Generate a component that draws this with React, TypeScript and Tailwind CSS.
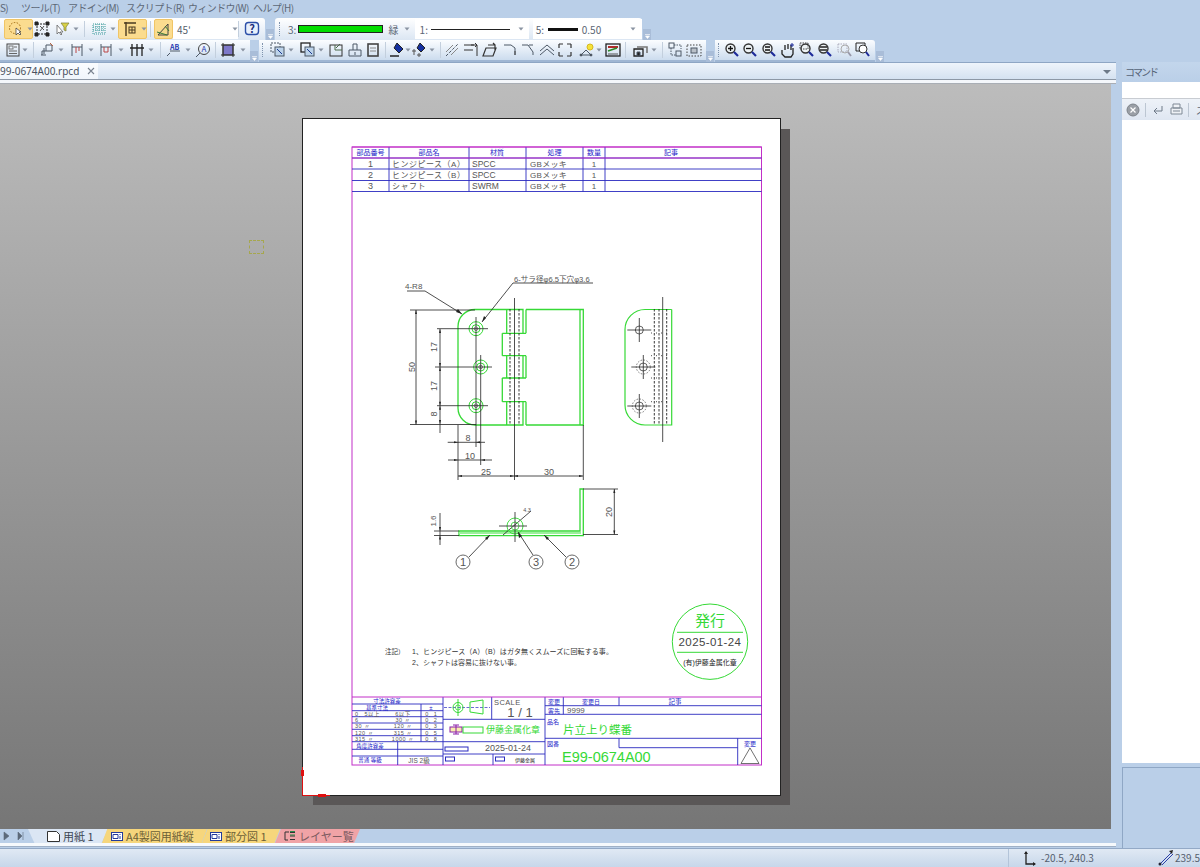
import React from "react";

const Ico = ({ c = "", children, w = 16 }: { c?: string; children: React.ReactNode; w?: number }) => (
  <svg className={"shrink-0 " + c} width={w} height={16} viewBox={`0 0 ${w} 16`} fill="none" stroke="#4d5866" strokeWidth={1}>
    {children}
  </svg>
);
const Drop = ({ c = "" }: { c?: string }) => (
  <svg className={"shrink-0 " + c} width={6} height={4} viewBox="0 0 6 4">
    <path d="M0.5 0.5h5L3 3.5z" fill="#8a94a2" />
  </svg>
);
const Sep = ({ c = "" }: { c?: string }) => <div className={"w-px h-[16px] shrink-0 bg-[#c3cfdd] " + c} />;
const Grip = ({ c = "" }: { c?: string }) => (
  <div className={"w-px h-[14px] shrink-0 border-l border-dotted border-[#7f93ad] " + c} />
);
const Over = ({ c = "" }: { c?: string }) => (
  <div className={"w-[8px] h-[11px] self-end shrink-0 bg-[#a9bdd8] flex items-end justify-center pb-[1px] " + c}>
    <svg width={5} height={5} viewBox="0 0 5 5"><path d="M0 .5h5M.5 2h4L2.5 4.5z" stroke="#fff" fill="#fff" strokeWidth={0.6} /></svg>
  </div>
);
const Mag = ({ c = "", children }: { c?: string; children?: React.ReactNode }) => (
  <Ico c={c}>
    <circle cx={6.5} cy={6.5} r={4.5} stroke="#333" strokeWidth={1.4} fill="#eef3f5" />
    <path d="M10 10l4 4" stroke="#1d2a9a" strokeWidth={2.2} />
    {children}
  </Ico>
);

const T1 = "bg-linear-to-b from-[#ffffff] to-[#dbe6f3]";
const T2 = "bg-linear-to-b from-[#fbfdff] to-[#ccdcee] border-b-2 border-[#9fb6d3]";
const YB = "h-[20px] flex items-center rounded-[2px] bg-[#fbdc8f] border border-[#f0c566]";

function Toolbar1() {
  return (
    <div className="h-[22px] flex items-stretch text-[10px] text-[#5b6675]">
      <div className={"w-[265px] flex items-center rounded-tr-[3px] " + T1}>
        <div className={"ml-1 w-[29px] gap-[3px] pl-[3px] " + YB}>
          <Ico><circle cx={7} cy={7} r={5.5} stroke="#a06a10" strokeDasharray="1.5 1.5" /><path d="M8 7v7l2-2 2 2 1-1-2-2h2z" fill="#fff" stroke="#333" strokeWidth={0.7} /></Ico>
          <Drop />
        </div>
        <Ico c="ml-[1px]"><rect x={3} y={3} width={10} height={10} strokeDasharray="2 1" stroke="#222" /><path d="M1 1h3v3H1zM12 1h3v3h-3zM1 12h3v3H1zM12 12h3v3h-3z" fill="#222" stroke="#222" /><path d="M6 5l4 4M6 10l4-5" stroke="#555" /></Ico>
        <Ico c="ml-1"><path d="M3 4v9l2-2 2 3 1-1-2-2h3z" fill="#fff" stroke="#666" strokeWidth={0.8} /><path d="M7 2h8l-3 4v4l-2-1V6z" fill="#d9d245" stroke="#7a7a3a" strokeWidth={0.7} /></Ico>
        <Drop c="ml-[3px]" />
        <Sep c="ml-[5px]" />
        <Ico c="ml-[6px]"><path d="M2 3h12v10H2zM2 6h12M2 9h12M5 3v10M8 3v10M11 3v10" stroke="#3a9a9a" strokeDasharray="1 1" /></Ico>
        <Drop c="ml-[3px]" />
        <div className={"ml-[2px] w-[29px] gap-[3px] pl-[3px] " + YB}>
          <Ico><path d="M2 2h12M4 1v14" stroke="#4a3a20" strokeWidth={1.4} /><rect x={7} y={6} width={6} height={6} stroke="#4a3a20" /><path d="M7 9h6M10 6v6" stroke="#4a3a20" /></Ico>
          <Drop />
        </div>
        <Sep c="ml-[3px]" />
        <div className={"ml-[3px] w-[19px] justify-center " + YB}>
          <Ico><path d="M2 14L12 3v11z" stroke="#444" fill="#f3d98a" /><path d="M1 11l10 3M9 5l4 5" stroke="#3a7a3a" /></Ico>
        </div>
        <div className="h-[20px] w-[65px] bg-white flex items-center pl-[4px] relative text-[10px] text-[#555f6d]">
          45'
          <Drop c="ml-[41px]" />
        </div>
        <Sep />
        <Ico c="ml-[5px]"><rect x={1.5} y={1.5} width={13} height={12} rx={3} stroke="#2c4fa8" strokeWidth={1.4} fill="#e8f0fb" /><text x={8} y={11.5} fontSize={11} fontWeight={700} textAnchor="middle" fill="#1c2f7a" stroke="none">?</text></Ico>
      </div>
      <Over c="ml-px" />
      <div className={"ml-[1px] w-[367px] flex items-center rounded-tl-[3px] rounded-tr-[3px] " + T1}>
        <Grip c="ml-[4px]" />
        <span className="ml-[8px] w-[10px]">3:</span>
        <div className="w-[87px] h-[8px] bg-[#00dc00] border border-[#222] ml-[0px]" />
        <span className="ml-[6px]">緑</span>
        <Drop c="ml-[5px]" />
        <div className="ml-[5px] h-[20px] w-[117px] bg-white flex items-center pl-[5px]">
          <span className="w-[11px]">1:</span>
          <div className="w-[79px] h-px bg-[#222]" />
          <Drop c="ml-[8px]" />
        </div>
        <div className="ml-[4px] h-[20px] w-[112px] bg-white flex items-center pl-[3px]">
          <span className="w-[12px]">5:</span>
          <div className="w-[30px] h-[3px] bg-[#111]" />
          <span className="ml-[4px]">0.50</span>
          <Drop c="ml-[29px]" />
        </div>
      </div>
      <Over c="ml-px" />
    </div>
  );
}

function Toolbar2() {
  return (
    <div className="h-[22px] flex items-stretch">
      <div className={"w-[250px] flex items-center " + T2}>
        <Ico c="ml-[5px]"><rect x={2} y={2} width={12} height={12} stroke="#444" /><rect x={4} y={4} width={4} height={3} stroke="#777" /><path d="M9 5h3M4 9h8M4 11.5h8" stroke="#666" /></Ico>
        <Drop c="ml-[1px]" />
        <Sep c="ml-[5px]" />
        <Ico c="ml-[6px]"><path d="M6 3h6v6H6zM6 9L2 9v4M1 13h5M4 6v6" /><path d="M10 1l3 3" stroke="#b64" /></Ico>
        <Drop c="ml-[2px]" />
        <Ico c="ml-[5px]"><path d="M3 2v12M13 2v12M3 5h10" /><path d="M7 5v6M10 5v4" stroke="#b44" /></Ico>
        <Drop c="ml-[3px]" />
        <Ico c="ml-1"><path d="M3 2v12M13 2v12M3 5h10" /><path d="M6 5v5h4V5" stroke="#b44" /></Ico>
        <Drop c="ml-1" />
        <Ico c="ml-[5px]"><path d="M3 2v12M8 2v12M13 2v12M1 6h14" strokeWidth={1.3} stroke="#222" /></Ico>
        <Drop c="ml-[3px]" />
        <Sep c="ml-[6px]" />
        <Ico c="ml-1"><path d="M2 14l3-3M5 9h10" /><text x={5} y={7.5} fontSize={7} fontWeight={700} fill="#2a3ab0" stroke="none">AB</text></Ico>
        <Drop c="ml-1" />
        <Ico c="ml-1"><circle cx={9} cy={7} r={5.5} stroke="#444" /><text x={6.5} y={10} fontSize={8} fill="#2a3ab0" stroke="none">A</text><path d="M1 15l4-4" /></Ico>
        <Sep c="ml-1" />
        <Ico c="ml-1"><rect x={3} y={3} width={10} height={10} fill="#7d78c8" stroke="#333" /><path d="M1 3h14M1 13h14M3 1v14M13 1v14" stroke="#333" /></Ico>
        <Drop c="ml-1" />
      </div>
      <Over />
      <div className={"ml-px w-[447px] flex items-center " + T2}>
        <Grip c="ml-[3px]" />
        <Ico c="ml-[7px]"><rect x={1} y={1} width={9} height={9} strokeDasharray="2 1" /><rect x={5} y={5} width={9} height={9} fill="#bcd3ea" /><path d="M7 7l5 5" stroke="#1c3a90" /></Ico>
        <Drop c="ml-[2px]" />
        <Ico c="ml-[6px]"><rect x={1} y={1} width={9} height={9} stroke="#222" strokeWidth={1.3} /><rect x={5} y={5} width={9} height={9} fill="#bcd3ea" /><path d="M7 7l5 5" stroke="#1c3a90" /></Ico>
        <Drop c="ml-[2px]" />
        <Ico c="ml-1"><rect x={2} y={3} width={12} height={11} stroke="#333" /><path d="M7 3v5h7M12 2l-4 4" stroke="#4a6a4a" /></Ico>
        <Ico c="ml-[3px]"><path d="M2 8h12M2 8v6h12V8M6 8V2h4v6M8 10v3" /></Ico>
        <Ico c="ml-[2px]"><rect x={3} y={2} width={10} height={12} strokeWidth={1.6} stroke="#444" /><path d="M5 6h6M5 9h6" stroke="#888" /></Ico>
        <Sep c="ml-1" />
        <Ico c="ml-[3px]"><path d="M8 1l6 6-4 4-5-5z" fill="#1430a0" stroke="#222" /><path d="M1 14h9" stroke="#222" strokeWidth={1.5} /></Ico>
        <Drop c="ml-0" />
        <Ico c="ml-0"><path d="M9 1l5 5-4 4-4-4z" fill="#1430a0" stroke="#222" /><path d="M1 9h4M3 7v6M8 11v4M6 13h4" stroke="#555" /></Ico>
        <Drop c="ml-[2px]" />
        <Sep c="ml-[5px]" />
        <Ico c="ml-[3px]"><path d="M2 14L14 2" strokeDasharray="3 1.5" /><path d="M9 3l-7 7M14 6l-7 7" stroke="#888" /></Ico>
        <Ico c="ml-[3px]"><path d="M1 3h10M8 3h6v11M1 8h9M12 1l2 2-2 2" stroke="#333" /></Ico>
        <Ico c="ml-[3px]"><path d="M4 6h10l-3 8H1zM6 3h7v6M11 1l2 2" stroke="#333" strokeWidth={1.2} /></Ico>
        <Ico c="ml-1"><path d="M2 3h7l4 3v7" /><path d="M13 9v4" stroke="#444" /></Ico>
        <Ico c="ml-[2px]"><path d="M2 3h6l5 7v3M9 3l4 0" /></Ico>
        <Ico c="ml-[3px]"><path d="M1 9l7-6 7 6M1 13l7-6 7 6" /></Ico>
        <Ico c="ml-[2px]"><path d="M2 2h4M10 2h4M2 14h4M10 14h4M2 2v4M2 10v4M14 2v4M14 10v4" stroke="#333" strokeWidth={1.2} /></Ico>
        <Ico c="ml-[6px]"><path d="M2 13l5-5 5 5z" /><circle cx={11} cy={5} r={3} fill="#f5e23a" stroke="#d6b820" /><circle cx={2} cy={13} r={1} fill="#333" /><circle cx={12} cy={13} r={1} fill="#333" /></Ico>
        <Drop c="ml-[1px]" />
        <Ico c="ml-[3px]"><rect x={1} y={2} width={14} height={12} stroke="#222" strokeWidth={1.3} /><path d="M3 5h10" stroke="#b02a2a" strokeWidth={2} /><path d="M3 9l9-3" stroke="#2a8a2a" strokeWidth={1.5} /><path d="M3 12h10" stroke="#555" /></Ico>
        <Sep c="ml-1" />
        <Ico c="ml-[6px]"><path d="M2 7h9v7H2z" stroke="#222" strokeWidth={1.3} /><path d="M5 5h10v6" stroke="#777" strokeWidth={1.6} /><path d="M5 10h3v4H5z" fill="#222" /></Ico>
        <Drop c="ml-[3px]" />
        <Sep c="ml-[5px]" />
        <Ico c="ml-1"><rect x={2} y={1} width={5} height={5} /><rect x={9} y={9} width={5} height={5} /><path d="M4 6v7h5M7 3h7v4" strokeDasharray="1.5 1" /></Ico>
        <Ico c="ml-[3px]"><rect x={1} y={3} width={14} height={11} strokeDasharray="1.5 1.5" stroke="#444" /><rect x={5} y={6} width={6} height={5} fill="#b9c0c8" /></Ico>
      </div>
      <Over />
      <div className={"ml-px w-[160px] flex items-center rounded-tr-[3px] " + T2}>
        <Grip c="ml-[3px]" />
        <Mag c="ml-[5px]"><path d="M4 6.5h5M6.5 4v5" strokeWidth={1.3} stroke="#111" /></Mag>
        <Mag c="ml-[2px]"><path d="M4 6.5h5" strokeWidth={1.3} stroke="#111" /></Mag>
        <Mag c="ml-[3px]"><path d="M4 5h5M4 8h5" strokeWidth={1.4} stroke="#111" /></Mag>
        <Ico c="ml-[2px]"><path d="M3 8v4l3 3h6l2-3V6M6 8V3M9 7V2M12 8V3" stroke="#222" strokeWidth={1.3} /><path d="M13 1v4M11 3h4" stroke="#1d2a9a" /></Ico>
        <Mag c="ml-1"><rect x={1} y={1} width={8} height={6} strokeDasharray="1.5 1" stroke="#444" /></Mag>
        <Mag c="ml-[2px]"><path d="M3 5h7M3 8h7" strokeWidth={1.6} stroke="#222" /></Mag>
        <Ico c="ml-1"><rect x={1} y={2} width={9} height={8} strokeDasharray="1.5 1" stroke="#aab" /><circle cx={8} cy={7} r={4} stroke="#aaa" /><path d="M11 10l3 4" stroke="#99a" strokeWidth={1.8} /></Ico>
        <Ico c="ml-[2px]"><path d="M1 1h9v8H1z" stroke="#222" /><circle cx={8} cy={7} r={4} stroke="#333" fill="#fff" /><path d="M11 10l3 4" stroke="#1d2a9a" strokeWidth={2} /></Ico>
      </div>
      <Over c="ml-px" />
    </div>
  );
}

const Ar = ({ x, y, d, s = 4 }: { x: number; y: number; d: "u" | "d" | "l" | "r"; s?: number }) => {
  const p = {
    u: `${x},${y} ${x - 1},${y + s} ${x + 1},${y + s}`,
    d: `${x},${y} ${x - 1},${y - s} ${x + 1},${y - s}`,
    l: `${x},${y} ${x + s},${y - 1} ${x + s},${y + 1}`,
    r: `${x},${y} ${x - s},${y - 1} ${x - s},${y + 1}`,
  }[d];
  return <polygon points={p} fill="#222" stroke="none" />;
};

const G = "#36d936";
const Bl = "#2a2ac0";
const Mg = "#c22fc8";
const K = "#222";
const Tx = "#555";

const L = ({ d, s = K, w = 0.8, dash }: { d: string; s?: string; w?: number; dash?: string }) => (
  <path d={d} stroke={s} strokeWidth={w} strokeDasharray={dash} fill="none" />
);
const Tt = ({ x, y, t, f = 7, c = Tx, a = "middle", r, ls }: { x: number; y: number; t: string; f?: number; c?: string; a?: "start" | "middle" | "end"; r?: boolean; ls?: number }) => (
  <text x={x} y={y} fontSize={f} fill={c} textAnchor={a} letterSpacing={ls} transform={r ? `rotate(-90 ${x} ${y})` : undefined}>
    {t}
  </text>
);
const Cross = ({ x, y, rx = 12, ry = 12 }: { x: number; y: number; rx?: number; ry?: number }) => (
  <L d={`M${x - rx} ${y}H${x + rx}M${x} ${y - ry}V${y + ry}`} />
);

function Drawing() {
  return (
    <svg width={477} height={676} viewBox="303 119 477 676" className="block overflow-visible font-['Liberation_Sans','Noto_Sans_CJK_JP',sans-serif]">
      {/* border */}
      <rect x={352} y={147} width={409.5} height={618} fill="none" stroke={Mg} strokeWidth={1} />
      {/* parts table */}
      <L s={Bl} d="M352 158H761.5M352 169H761.5M352 180.5H761.5M352 191.5H761.5M389 147V191.5M469 147V191.5M526 147V191.5M583 147V191.5M605 147V191.5" w={0.9} />
      <L s={Mg} d="M352 147H761.5M352 158H761.5" w={1} />
      {[["部品番号",370.5],["部品名",429],["材質",497],["処理",554.5],["数量",594],["記事",671]].map(([t,x]) => (
        <Tt key={t as string} x={x as number} y={155} t={t as string} f={7} c="#2222c8" />
      ))}
      {[["1","ヒンジピース（A）","SPCC"],["2","ヒンジピース（B）","SPCC"],["3","シャフト","SWRM"]].map((r,i) => {
        const y = [166.5,178,189][i];
        return (
          <g key={i}>
            <Tt x={370.5} y={y} t={r[0]} f={9} />
            <Tt x={392} y={y} t={r[1]} f={8} a="start" ls={0.5} />
            <Tt x={472} y={y} t={r[2]} f={8.5} a="start" />
            <Tt x={530} y={y} t="GBメッキ" f={8} a="start" ls={0.3} />
            <Tt x={594} y={y} t="1" f={8} />
          </g>
        );
      })}

      {/* front view */}
      <L s={G} w={1.3} d="M475 309.5H523V333.3M475 425H523V401.7M475 309.5A17 17 0 0 0 458 326.5V408A17 17 0 0 0 475 425M506.7 309.5V333.3M506.7 355.7V378M506.7 401.7V425M502.3 333.3H526M502.3 355.7H526M502.3 378H526M502.3 401.7H526M502.3 333.3V355.7M502.3 378V401.7M523 355.7V378M526 309.5V333.3M526 355.7V378M526 401.7V425M526 309.5H583.3V425H526M580 309.5V425" />
      <L dash="2.5 1.5" w={0.9} d="M510 309V425M519 309V425" />
      <L d="M514.5 298V480" />
      {[[476,328.7],[480.7,367],[476,405.7]].map(([x,y]) => (
        <g key={y}>
          <circle cx={x} cy={y} r={7} fill="none" stroke={G} strokeWidth={1} />
          <circle cx={x} cy={y} r={4} fill="none" stroke={G} strokeWidth={1} />
          <circle cx={x} cy={y} r={1.8} fill="none" stroke={K} strokeWidth={0.5} />
        </g>
      ))}
      <L d="M410 310H475M410 424.5H476M437 328.7H488M435 367H492M437 405.7H488M476 317V447M480.7 355V465M458 425V480M583.3 425V480" />
      <L d="M416 310V424.5M440 329V433M447.7 442.3H485M448 460H492M458 476H514M514 476H583" />
      <Ar x={416} y={310} d="u" /><Ar x={416} y={424.5} d="d" />
      <Ar x={440} y={329} d="u" /><Ar x={440} y={367} d="d" /><Ar x={440} y={367} d="u" /><Ar x={440} y={405.7} d="d" /><Ar x={440} y={405.7} d="u" /><Ar x={440} y={424} d="d" />
      <Ar x={458} y={442.3} d="r" /><Ar x={476} y={442.3} d="l" /><Ar x={458} y={460} d="r" /><Ar x={481} y={460} d="l" />
      <Ar x={458} y={476} d="l" /><Ar x={514} y={476} d="r" /><Ar x={514} y={476} d="l" /><Ar x={583} y={476} d="r" />
      <Tt x={415} y={367} t="50" r f={9} />
      <Tt x={437} y={347} t="17" r f={9} /><Tt x={437} y={386} t="17" r f={9} /><Tt x={437} y={414} t="8" r f={9} />
      <Tt x={468} y={441} t="8" f={9} /><Tt x={470} y={459} t="10" f={9} /><Tt x={486} y={475} t="25" f={9} /><Tt x={549} y={475} t="30" f={9} />
      <L d="M407 291H425L462 314M593 283H513L482 322" />
      <polygon points="482,322 484,316 486,318" fill={K} />
      <polygon points="462,314 456,312 458,309" fill={K} />
      <Tt x={405} y={289} t="4-R8" f={8} a="start" />
      <Tt x={514} y={282} t="6-サラ径φ6.5下穴φ3.6" f={7.6} a="start" />

      {/* side view */}
      <L s={G} w={1.2} d="M671.7 309.5H645A20 20 0 0 0 625 329.5V405A20 20 0 0 0 645 425H671.7V309.5" />
      <L dash="2.5 1.5" w={0.9} d="M654.3 309V425M659 309V425M666.7 309V425" />
      <L d="M662.7 297V442" />
      <L d="M651 333H670M651 355.7H670M651 378H670M651 401.7H670" dash="1 4" />
      {[[639.3,330],[643.3,367],[639.3,406]].map(([x,y],i) => (
        <g key={y}>
          <circle cx={x} cy={y} r={4} fill="none" stroke={K} strokeWidth={0.7} />
          {i > 0 && <circle cx={x} cy={y} r={7} fill="none" stroke={K} strokeWidth={0.6} strokeDasharray="1.5 1.5" />}
          <Cross x={x} y={y} />
        </g>
      ))}

      {/* bottom view */}
      <L s={G} w={1.3} d="M459 531H580V489H583.3V535.7H459z" />
      <path d="M459 533H581" stroke="#9cf09c" strokeWidth={2} />
      <L d="M434 531H459M434 535.5H459M440 513V545M583 489H618M583 534.5H618M614.3 489V534.5M503 535L531 511" />
      <Ar x={440} y={531} d="d" /><Ar x={440} y={535.5} d="u" /><Ar x={614.3} y={489} d="u" /><Ar x={614.3} y={534.5} d="d" />
      <circle cx={515} cy={526} r={8} fill="none" stroke={G} strokeWidth={0.9} />
      <circle cx={515} cy={526} r={4} fill="none" stroke={G} strokeWidth={0.8} />
      <L d="M499 526H527M515 512V542" />
      <Tt x={436} y={521} t="1.6" r f={8} />
      <Tt x={612} y={512} t="20" r f={9} />
      <Tt x={527} y={512} t="4.3" f={5.5} />
      {[[463,562,"1"],[536,562,"3"],[572,562,"2"]].map(([x,y,t]) => (
        <g key={t as string}>
          <circle cx={x as number} cy={y as number} r={7} fill="none" stroke="#444" strokeWidth={0.8} />
          <Tt x={x as number} y={(y as number) + 4} t={t as string} f={11} />
        </g>
      ))}
      <L d="M469 557L490 535M533 555L518 532M566 557L544 535" />
      <polygon points="490,535 485,538 487,540" fill={K} />
      <polygon points="518,532 519,538 522,536" fill={K} />
      <polygon points="544,535 549,538 547,540" fill={K} />

      {/* notes */}
      <Tt x={385} y={654} t="注記）" f={6.5} a="start" c="#333" />
      <Tt x={412} y={654} t="1、ヒンジピース（A）（B）はガタ無くスムーズに回転する事。" f={7} a="start" c="#333" ls={0.1} />
      <Tt x={412} y={665} t="2、シャフトは容易に抜けない事。" f={7} a="start" c="#333" />

      {/* stamp */}
      <circle cx={710} cy={641.7} r={37.7} fill="none" stroke={G} strokeWidth={1} />
      <L s={G} w={1} d="M677 632.3H743M677 652.3H743" />
      <Tt x={710} y={626} t="発行" f={15} c={G} />
      <Tt x={710} y={646} t="2025-01-24" f={11.5} c="#444" ls={0.4} />
      <Tt x={710} y={665} t="(有)伊藤金属化章" f={7} c="#222" />

      {/* title block */}
      <L s={Bl} w={0.9} d="M352 704H443M352 710.7H443M352 716.7H443M352 723H443M352 729.3H443M352 735.7H443M352 741.7H443M352 749.3H443M352 756H443M421 704V741.7M397.7 741.7V765M443 697V765M491.7 697V719.3M545 697V765M443 719.3H545M443 741.7H545M443 754H545M493 754V765" />
      <L s={Bl} w={0.9} d="M545 705.7H761.5M545 714.3H761.5M545 738.3H761.5M563.3 697V714.3M619 697V705.7M619 738.3V747.7M619 747.7H737.7M737.7 738.3V765" />
      <L s={Mg} w={1} d="M352 697H761.5" />
      <Tt x={387} y={703} t="寸法許容差" f={5.5} c="#2222c8" />
      <Tt x={377} y={709.7} t="基準寸法" f={5.5} c="#2222c8" />
      <Tt x={431} y={709.7} t="±" f={6} c="#2222c8" />
      {[["0．5以上","6以下","0．1"],["6","30 〃","0．2"],["30 〃","120 〃","0．3"],["120 〃","315 〃","0．5"],["315 〃","1000 〃","0．8"]].map((r,i) => {
        const y = [715.7,722,728.3,734.7,741][i];
        return (
          <g key={i}>
            <Tt x={355} y={y} t={r[0]} f={5.5} a="start" ls={0.5} />
            <Tt x={403} y={y} t={r[1]} f={5.5} a="middle" ls={0.5} />
            <Tt x={431} y={y} t={r[2]} f={5.5} />
          </g>
        );
      })}
      <Tt x={370} y={748} t="角度許容差" f={5.5} c="#2222c8" />
      <Tt x={370} y={762} t="普通 等級" f={5.5} c="#2222c8" />
      <Tt x={419} y={762.5} t="JIS 2級" f={6.5} />
      {/* logo */}
      <L s={Bl} dash="3 1.5" w={0.7} d="M444 707.5H490" />
      <L s={G} w={1} d="M458 699V716M470 702L483 700V714L470 712z" />
      <circle cx={458} cy={707.5} r={5} fill="none" stroke={G} strokeWidth={1} />
      <circle cx={458} cy={707.5} r={2.5} fill="none" stroke={G} strokeWidth={0.8} />
      <Tt x={494} y={705} t="SCALE" f={7.5} a="start" ls={0.4} />
      <Tt x={520} y={717} t="1 / 1" f={13} />
      <rect x={450} y={727} width={12} height={5} fill="#f9ecb0" stroke="#8a1fa8" strokeWidth={1} />
      <L s="#8a1fa8" w={1} d="M456 725V734M453 725H459M453 734H459" />
      <rect x={463} y={727} width={20} height={6} fill="none" stroke={G} strokeWidth={1} />
      <Tt x={486} y={733} t="伊藤金属化章" f={9} a="start" c={G} />
      <rect x={445} y={747} width={23} height={4} fill="none" stroke={Bl} />
      <Tt x={508} y={751} t="2025-01-24" f={9} />
      <rect x={445.5} y={757} width={9} height={4} fill="none" stroke={Bl} />
      <rect x={495.5} y={757} width={9} height={4} fill="none" stroke={Bl} />
      <Tt x={525} y={762} t="伊藤金属" f={5} c="#222" />
      <Tt x={554} y={704} t="変更" f={6} c="#2222c8" />
      <Tt x={591} y={704} t="変更日" f={6} c="#2222c8" />
      <Tt x={675} y={703.5} t="記事" f={6.5} c="#2222c8" />
      <Tt x={554} y={712.5} t="客先" f={6} c="#2222c8" />
      <Tt x={567} y={713} t="9999" f={8} a="start" />
      <Tt x={547} y={724} t="品名" f={6} a="start" c="#2222c8" />
      <Tt x={563} y={734} t="片立上り蝶番" f={11.5} a="start" c={G} />
      <Tt x={547} y={746} t="図番" f={6} a="start" c="#2222c8" />
      <Tt x={562} y={762} t="E99-0674A00" f={14.5} a="start" c={G} />
      <Tt x={750} y={746} t="変更" f={6} c="#2222c8" />
      <path d="M741 763.5L750 748L759 763.5z" fill="none" stroke="#333" strokeWidth={0.7} />

      {/* origin */}
      <L s="#e01010" w={1} d="M302.5 767V795.5H330" />
      <path d="M301 770h3v6h-3zM318 794h8v3h-8z" fill="#e01010" />
    </svg>
  );
}

const Sheet = ({ c, label, icon }: { c: string; label: string; icon: React.ReactNode }) => (
  <div className={"h-[14px] flex items-center shrink-0 " + c}>
    {icon}
    <span className="ml-[3px] text-[11px] leading-[14px] whitespace-nowrap">{label}</span>
  </div>
);
const SheetIco = () => (
  <svg width={12} height={10} viewBox="0 0 12 10" className="shrink-0">
    <rect x={0.5} y={1.5} width={11} height={8} fill="#fff" stroke="#233a9a" />
    <path d="M2 3.5h5v4H2zM9 3v1M9 5v3" stroke="#233a9a" fill="none" />
  </svg>
);

export default function App() {
  return (
    <div className="w-[1200px] h-[867px] overflow-hidden flex flex-col bg-[#bacfe8] font-['Noto_Sans_CJK_JP','Noto_Sans',sans-serif] text-[#5b6675]">
      {/* menu */}
      <div className="h-[18px] flex items-center text-[10px] leading-none text-[#5d6877] pb-[3px] whitespace-nowrap tracking-[-0.6px]">
        <span className="w-[21px]">S)</span>
        <span className="w-[47px]">ツール(T)</span>
        <span className="w-[58px]">アドイン(M)</span>
        <span className="w-[62px]">スクリプト(R)</span>
        <span className="w-[65px]">ウィンドウ(W)</span>
        <span>ヘルプ(H)</span>
      </div>
      <Toolbar1 />
      <Toolbar2 />
      <div className="h-[786px] flex">
        {/* document area */}
        <div className="w-[1116px] shrink-0 flex flex-col">
          <div className="h-[18px] flex items-end bg-linear-to-b from-[#eef4fb] to-[#d5e2f1] border-t border-[#8ea6c4] border-b border-b-[#8d98a6] relative">
            <div className="w-[98px] h-[16px] bg-linear-to-b from-[#fbfdff] to-[#f0f5fb] flex items-center overflow-hidden text-[10px] text-[#4a5260] leading-none whitespace-nowrap">
              <span className="font-['Noto_Sans',sans-serif] w-[87px] shrink-0">99-0674A00.rpcd</span>
              <svg width={8} height={8} viewBox="0 0 8 8" className="shrink-0"><path d="M1 1l6 6M7 1l-6 6" stroke="#7a8490" strokeWidth={1.1} /></svg>
            </div>
            <svg width={8} height={4} viewBox="0 0 8 4" className="absolute right-[5px] top-[7px]"><path d="M0 0h8L4 4z" fill="#6e7a88" /></svg>
          </div>
          <div className="h-[4px] bg-[#f4f7fb] border-b border-[#a9aeb5]" />
          <div className="h-[745px] mr-[5px] relative overflow-hidden bg-linear-to-b from-[#bcbcbc] to-[#767676] pl-[303px] pt-[35px]">
            <div className="absolute left-[249px] top-[156px] w-[15px] h-[14px] border border-dashed border-[#a6a74e]" />
            <div className="w-[477px] h-[676px] bg-white shadow-[0_0_0_1px_#222,10px_10px_0_#5a5757]">
              <Drawing />
            </div>
          </div>
          <div className="h-[14px] flex items-center relative">
            <svg width={24} height={10} viewBox="0 0 24 10" className="ml-[2px] shrink-0"><path d="M2 1l5 4-5 4zM16 1l4 4-4 4zM21 1v8" fill="#5d6a7a" stroke="#5d6a7a" strokeWidth={0.6} /></svg>
            <Sheet
              c="w-[80px] ml-[2px] pl-[19px] bg-[#dbe6f4] text-[#3d4654] [clip-path:polygon(0_0,100%_0,92%_100%,8%_100%)]"
              label="用紙 1"
              icon={<svg width={13} height={11} viewBox="0 0 13 11" className="shrink-0"><path d="M.5.5h9l3 3v7H.5z" fill="#fff" stroke="#333" /></svg>}
            />
            <Sheet c="w-[105px] -ml-[6px] pl-[9px] bg-[#f6d67c] text-[#6c5f36] [clip-path:polygon(5%_0,100%_0,95%_100%,0_100%)]" label="A4製図用紙縦" icon={<SheetIco />} />
            <Sheet c="w-[78px] -ml-[5px] pl-[8px] bg-[#f6d67c] text-[#6c5f36] [clip-path:polygon(7%_0,100%_0,93%_100%,0_100%)]" label="部分図 1" icon={<SheetIco />} />
            <Sheet
              c="w-[85px] -ml-[5px] pl-[9px] bg-[#f0a3a6] text-[#7c5a60] [clip-path:polygon(7%_0,100%_0,93%_100%,0_100%)]"
              label="レイヤー覧"
              icon={
                <svg width={12} height={12} viewBox="0 0 12 12" className="shrink-0"><path d="M1 2h4M1 2v8h3M6 2.5h5M6 6h5M6 9.5h5" stroke="#333" fill="none" /><path d="M6 1.5h5M6 5h5" stroke="#2a8a4a" /></svg>
              }
            />
          </div>
          <div className="h-[4px] bg-[#f6f9fc] border-b border-[#9fb0c6]" />
          <div className="flex-1" />
        </div>
        {/* right panel */}
        <div className="ml-[6px] w-[78px] shrink-0 overflow-hidden flex flex-col">
          <div className="h-[20px] flex items-center pl-[3px] text-[10px] text-[#556377] bg-linear-to-b from-[#c3d6ec] to-[#bacfe8] leading-none tracking-[-2px]">コマンド</div>
          <div className="h-[17px] bg-white border-b border-[#c8ccd2]" />
          <div className="h-[21px] bg-linear-to-b from-[#eef2f8] to-[#dfe7f2] flex items-center overflow-hidden text-[10px]">
            <svg width={14} height={14} viewBox="0 0 14 14" className="ml-[4px] shrink-0"><circle cx={7} cy={7} r={6} fill="#9a9fa6" stroke="#7d838a" /><path d="M4.5 4.5l5 5M9.5 4.5l-5 5" stroke="#fff" strokeWidth={1.2} /></svg>
            <div className="ml-[5px] w-px h-[14px] bg-[#bcc6d2] shrink-0" />
            <svg width={12} height={12} viewBox="0 0 12 12" className="ml-[6px] shrink-0"><path d="M10 2v5H2M5 4L2 7l3 3" stroke="#6f7a88" fill="none" /></svg>
            <svg width={13} height={13} viewBox="0 0 13 13" className="ml-[6px] shrink-0"><path d="M3 1h7v4H3zM1 5h11v6H1zM3 8h7" stroke="#7f8995" fill="#eef1f5" /></svg>
            <div className="ml-[5px] w-px h-[14px] bg-[#bcc6d2] shrink-0" />
            <span className="ml-[7px] whitespace-nowrap text-[#5b6675]">ズーム</span>
          </div>
          <div className="h-[643px] bg-white" />
          <div className="h-[4px]" />
          <div className="flex-1 border border-[#8fa7c5] border-r-0 border-b-0 bg-[#bacfe8]" />
        </div>
      </div>
      {/* status */}
      <div className="flex-1 bg-linear-to-b from-[#e0e9f4] to-[#c7d7ea] border-t border-[#93a9c6] flex items-center text-[10px] text-[#55606f] whitespace-nowrap leading-none">
        <div className="ml-[1008px] w-px h-full bg-[#b3c4d9]" />
        <svg width={13} height={15} viewBox="0 0 13 15" className="ml-[14px] shrink-0"><path d="M3 1v12h9" stroke="#222" strokeWidth={1.3} fill="none" /><path d="M3 0l2 3H1zM13 13l-3 2v-4z" fill="#222" /></svg>
        <span className="ml-[5px] w-[121px]">-20.5, 240.3</span>
        <svg width={16} height={16} viewBox="0 0 16 16" className="shrink-0"><path d="M1 15L14 2M4 15L15 4" stroke="#2b3fa8" strokeWidth={1} /><path d="M15 0l-1 4-3-3z" fill="#222" /><circle cx={2} cy={14} r={1.5} fill="#223" /></svg>
        <span className="ml-[1px]">239.5</span>
      </div>
    </div>
  );
}
